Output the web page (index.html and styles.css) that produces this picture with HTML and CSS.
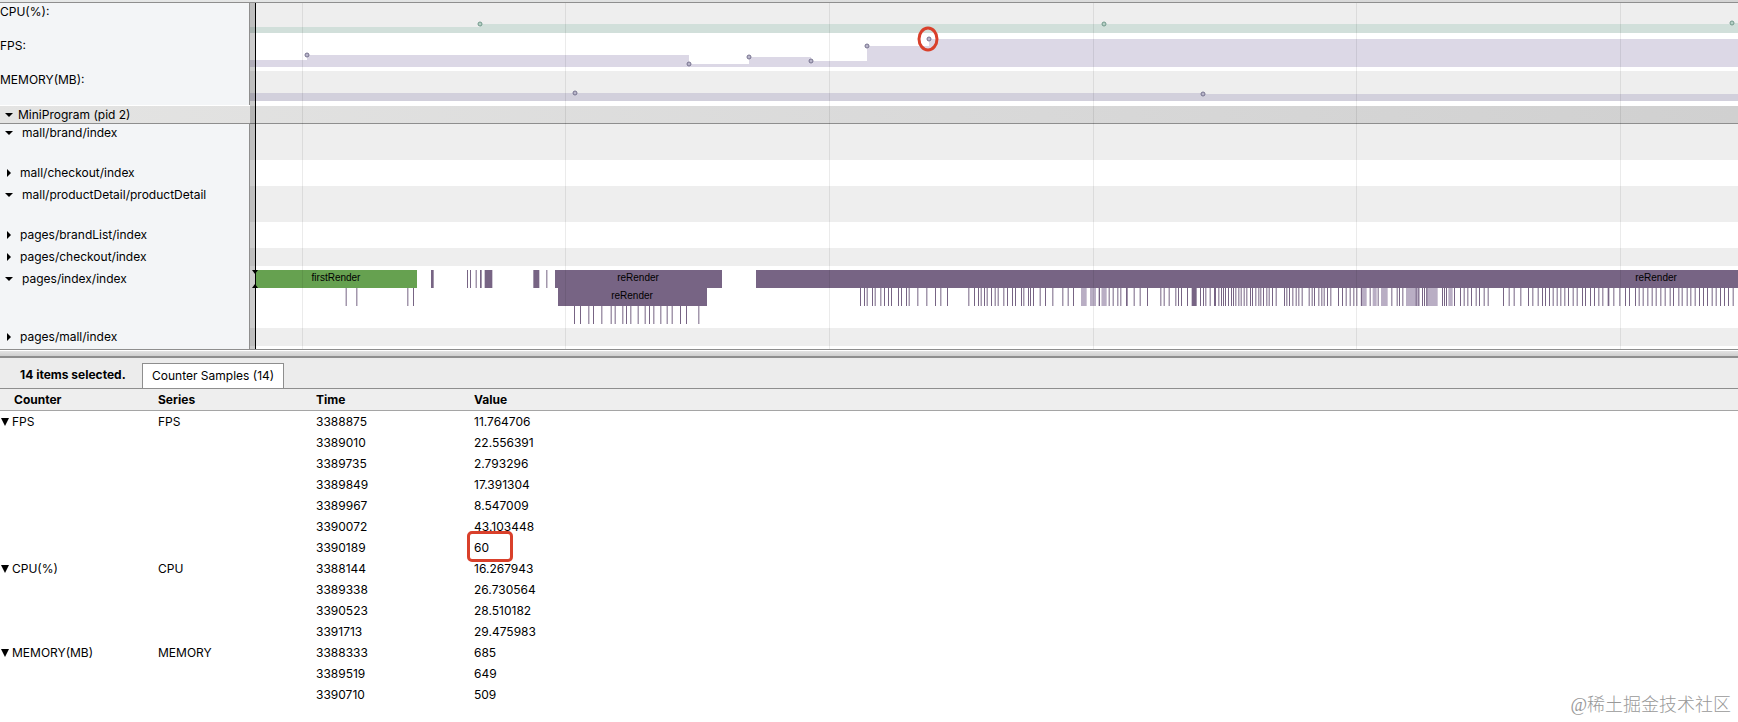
FILE: index.html
```html
<!DOCTYPE html>
<html lang="en">
  <head>
    <meta charset="UTF-8" />
    <title>Trace Viewer</title>
    <link rel="stylesheet" href="styles.css">
  </head>
  <body>
    <div class="timeline">
      <div class="ruler"></div>

      <div class="tracks">
        <div class="row counter">
          <div class="heading">CPU(%):</div>
          <svg class="track">
            <path class="cpu" d="M0 24H230V21H1482V20H4000V30H0z" />
            <g class="dot cpu-dot">
              <circle cx="230" cy="21" r="2" />
              <circle cx="854" cy="21" r="2" />
              <circle cx="1482" cy="20" r="2" />
            </g>
          </svg>
        </div>
        <div class="row counter">
          <div class="heading">FPS:</div>
          <svg class="track white">
            <path class="fps" d="M0 23H57V18H439V27H499V20H561V24H617V9H679V2H4000V30H0z" />
            <g class="dot">
              <circle cx="57" cy="18" r="2" />
              <circle cx="439" cy="27" r="2" />
              <circle cx="499" cy="20" r="2" />
              <circle cx="561" cy="24" r="2" />
              <circle cx="617" cy="9" r="2" />
              <circle cx="679" cy="2" r="2" />
            </g>
            <ellipse class="mark" cx="678" cy="2" rx="9" ry="11" />
          </svg>
        </div>
        <div class="row counter">
          <div class="heading">MEMORY(MB):</div>
          <svg class="track">
            <path class="memory" d="M0 22H953V23H4000V30H0z" />
            <g class="dot">
              <circle cx="325" cy="22" r="2" />
              <circle cx="953" cy="23" r="2" />
            </g>
          </svg>
        </div>

        <button class="process"><i class="arrow down"></i>MiniProgram (pid 2)</button>

        <div class="row tall">
          <button class="heading open"><i class="arrow down"></i>mall/brand/index</button>
          <svg class="track"></svg>
        </div>
        <div class="row">
          <button class="heading"><i class="arrow"></i>mall/checkout/index</button>
          <svg class="track white"></svg>
        </div>
        <div class="row tall">
          <button class="heading open"><i class="arrow down"></i>mall/productDetail/productDetail</button>
          <svg class="track"></svg>
        </div>
        <div class="row">
          <button class="heading"><i class="arrow"></i>pages/brandList/index</button>
          <svg class="track white"></svg>
        </div>
        <div class="row">
          <button class="heading"><i class="arrow"></i>pages/checkout/index</button>
          <svg class="track"></svg>
        </div>
        <div class="row three">
          <button class="heading open"><i class="arrow down"></i>pages/index/index</button>
          <svg class="track white" id="slices">
            <rect class="first" x="6" y="0" width="161" height="18" />
            <rect class="again" x="305" y="0" width="167" height="18" />
            <rect class="again" x="308" y="18" width="149" height="18" />
            <rect class="again" x="506" y="0" width="4000" height="18" />
            <text x="86" y="11">firstRender</text>
            <text x="388" y="11">reRender</text>
            <text x="382" y="29">reRender</text>
            <text x="1406" y="11">reRender</text>
          </svg>
        </div>
        <div class="row last">
          <button class="heading"><i class="arrow"></i>pages/mall/index</button>
          <svg class="track"></svg>
        </div>

        <svg class="grid" id="grid"></svg>
        <div class="splitter"></div>
        <svg class="cursor" width="8" height="18"><path d="M1 0H7L4 4zM1 18H7L4 14z" /></svg>
      </div>
    </div>

    <div class="drag-handle"></div>

    <div class="analysis">
      <div class="tabs">
        <b>14 items selected.</b>
        <button class="tab">Counter Samples (14)</button>
      </div>
      <table>
        <thead>
          <tr><th>Counter</th><th>Series</th><th>Time</th><th>Value</th></tr>
        </thead>
        <tbody>
          <tr><td><i class="fold"></i>FPS</td><td>FPS</td><td>3388875</td><td>11.764706</td></tr>
          <tr><td></td><td></td><td>3389010</td><td>22.556391</td></tr>
          <tr><td></td><td></td><td>3389735</td><td>2.793296</td></tr>
          <tr><td></td><td></td><td>3389849</td><td>17.391304</td></tr>
          <tr><td></td><td></td><td>3389967</td><td>8.547009</td></tr>
          <tr><td></td><td></td><td>3390072</td><td>43.103448</td></tr>
          <tr><td></td><td></td><td>3390189</td><td class="marked">60</td></tr>
          <tr><td><i class="fold"></i>CPU(%)</td><td>CPU</td><td>3388144</td><td>16.267943</td></tr>
          <tr><td></td><td></td><td>3389338</td><td>26.730564</td></tr>
          <tr><td></td><td></td><td>3390523</td><td>28.510182</td></tr>
          <tr><td></td><td></td><td>3391713</td><td>29.475983</td></tr>
          <tr><td><i class="fold"></i>MEMORY(MB)</td><td>MEMORY</td><td>3388333</td><td>685</td></tr>
          <tr><td></td><td></td><td>3389519</td><td>649</td></tr>
          <tr><td></td><td></td><td>3390710</td><td>509</td></tr>
        </tbody>
      </table>
      <div class="watermark">@稀土掘金技术社区</div>
    </div>

    <script>
      const slicesElement = document.querySelector('#slices')
      const gridElement = document.querySelector('#grid')
      const UNITS = 3 // time units in one pixel

      // each slice is a start, or [start, end, light]
      function drawSlices(from, depth, list) {
        list.forEach(item => {
          const [start, end, light] = Array.isArray(item) ? item : [item - 1, item + 2]
          const rect = document.createElementNS('http://www.w3.org/2000/svg', 'rect')
          rect.setAttribute('class', light ? 'again light' : 'again')
          rect.setAttribute('x', from + start / UNITS)
          rect.setAttribute('y', depth * 18)
          rect.setAttribute('width', (end - start) / UNITS)
          rect.setAttribute('height', 18)
          slicesElement.insertBefore(rect, slicesElement.querySelector('text'))
        })
      }

      drawSlices(170, 0, [[33, 41], 142, 151, 168, [180, 185], [194, 217], [340, 358], 380])
      drawSlices(0, 1, [288, 320, 473, 490])
      drawSlices(170, 2, [463, 481, 506, 520, 545, 573, 585, 608, 619, 632, 654, 675, 688, 701, 722, 741, 756, 781, 799, 836])
      drawSlices(500, 1, [
        331, 343, 351, 367, 375, 392, 403, 415, 424, 445, 454, 469, 477, 503, 530, 556, 572, 592,
        656, 673, 685, 693, 703, 711, 724, 735, 744, 761, 772, 787, 796, 814, 821, 835, 841, 850,
        870, 886, 908, 938, 954, 970, [993, 1010, 1], [1020, 1037, 1], 1022, 1036, 1047, [1055, 1068, 1]
      ])
      drawSlices(840, 1, [
        [0, 18, 1], 28, [35, 50, 1], 57, 69, 83, 92, [108, 113], 132, 150, 172,
        212, 222, 237, 257, 265, 274, 292, [305, 320], 331, 340, 347, 360, [372, 378], 386, 394,
        400, 406, 415, 424, 430, 437, 446, 453, 462, 470, 481, 487, 497, 506, 512, 520, 530, 537,
        547, 558, 583, 590, 598, 608, 618, 626, 636, 657, 666, 673, 686, 695, 702, 712, 722, 745,
        757, 768, 780, 791, 800, [812, 830, 1], 814, 840, [848, 860, 1], 864, [873, 893, 1], 905,
        921, 928, 938, [948, 986, 1]
      ])
      drawSlices(1160, 1, [
        [0, 28, 1], 18, 26, 37, 43, [48, 83, 1], 50, 97, 103, 109, [115, 128, 1], 133, 151, 162,
        173, 184, 198, 208, 222, 234, 280, 297, 312, 332, 355, 368, 384, 397, 406, 418, 429, 441,
        452, 464, 475, 489, 501, 517, 526, 541, 553, 566, 578, [593, 598], 611, 629, 646, 658,
        676, 687, 699, 713, 726, 738, 752, 765, 780, 790, 806, 816, 831, 842, 855, 868, 880, 892,
        906, 918, 931, 943, 955, 969
      ])

      // one vertical line every 500ms
      for (let i = 0; i < 16; i++) {
        const line = document.createElementNS('http://www.w3.org/2000/svg', 'rect')
        line.setAttribute('x', Math.floor(52 + i * 263.7))
        line.setAttribute('width', 1)
        line.setAttribute('height', '100%')
        gridElement.appendChild(line)
      }
    </script>
  </body>
</html>
```
FILE: styles.css
```css
html,
body {
  height: 100%;
  margin: 0;
}
body {
  display: flex;
  flex-direction: column;
  font: 12px/18px Inter, 'Liberation Sans', sans-serif;
  color: #000;
  background: #fff;
  overflow: hidden;
}
button {
  margin: 0;
  padding: 0;
  border: none;
  font: inherit;
  color: inherit;
  text-align: left;
}

.ruler {
  height: 2px;
  background: linear-gradient(90deg, #e6e8e8, #d4d4d4);
  border-bottom: 1px solid #8e8e8e;
}
.tracks {
  position: relative;
  border-bottom: 1px solid #8e8e8e;
}
.row {
  display: flex;
  height: 22px;
}
.row.counter {
  height: 34px;
}
.row.tall {
  height: 40px;
}
.row.three {
  height: 58px;
}
.row.last {
  height: 21px;
}
.heading {
  display: flex;
  align-items: flex-start;
  box-sizing: border-box;
  flex: none;
  width: 250px;
  background: #f3f5f7;
  border-right: 1px solid #8e8e8e;
  white-space: nowrap;
}
.track {
  flex: 1;
  min-width: 0;
  height: calc(100% - 4px);
  background: #eee;
  overflow: hidden;
}
.last .track {
  height: 18px;
}
.track.white {
  background: #fff;
  overflow: visible;
}
.process {
  display: flex;
  width: 100%;
  height: 19px;
  box-sizing: border-box;
  background: linear-gradient(90deg, #e4e4e3, #d8d8d8 60%, #d0d0d0);
  border-top: 1px solid #fff;
  border-bottom: 1px solid #8e8e8e;
  line-height: 17px;
}

.arrow {
  flex: none;
  width: 0;
  height: 0;
  margin: 5px 9px 0 7px;
  border: 4px solid transparent;
  border-left: 4px solid #000;
  border-right: 0;
}
.arrow.down {
  margin: 7px 5px 0 5px;
  border: 4px solid transparent;
  border-top: 4px solid #000;
  border-bottom: 0;
}
.open .arrow.down {
  margin-right: 9px;
}

.cpu {
  fill: #d1dfda;
}
.fps {
  fill: #dcd8e6;
}
.memory {
  fill: #d2d0dc;
}
.dot {
  fill: #b9b6ca;
  stroke: #77738f;
  stroke-width: 1px;
}
.cpu-dot {
  fill: #b6d0c6;
  stroke: #72998b;
}
.mark {
  fill: none;
  stroke: #d9402b;
  stroke-width: 3px;
}

.first {
  fill: #66a150;
}
.again {
  fill: #776484;
}
.again.light {
  fill: #b9aec4;
}
#slices {
  overflow: hidden;
}
#slices text {
  font: 10px 'Liberation Sans', sans-serif;
  text-anchor: middle;
}

.grid {
  position: absolute;
  top: 0;
  left: 250px;
  width: calc(100% - 250px);
  height: 100%;
  fill: rgba(0, 0, 0, 0.08);
}
.splitter {
  position: absolute;
  top: 0;
  bottom: 0;
  left: 250px;
  width: 5px;
  background: rgba(0, 0, 0, 0.2);
  border-right: 1px solid #000;
}
.cursor {
  position: absolute;
  left: 251px;
  bottom: 61px;
}

.drag-handle {
  flex: none;
  height: 5px;
  background: linear-gradient(#e2e2e2, #cfcfcf);
  border-top: 1px solid #fff;
  border-bottom: 2px solid #8e8e8e;
}

.analysis {
  position: relative;
  flex: 1;
}
.tabs {
  display: flex;
  align-items: flex-end;
  height: 30px;
  background: #ececec;
  border-bottom: 1px solid #8e8e8e;
}
.tabs b {
  width: 122px;
  padding-left: 20px;
  line-height: 26px;
}
.tab {
  height: 25px;
  padding: 0 9px;
  background: #fff;
  border: 1px solid #8e8e8e;
  border-bottom: none;
}

table {
  width: 100%;
  table-layout: fixed;
  border-collapse: separate;
  border-spacing: 0;
}
th,
td {
  height: 21px;
  padding: 0;
  line-height: 21px;
  text-align: left;
}
th {
  background: #eee;
  border-bottom: 1px solid #a5a5a5;
}
th:nth-child(-n + 3) {
  width: 158px;
}
th:first-child {
  width: 144px;
  padding-left: 14px;
}
td:first-child {
  padding-left: 1px;
}
.fold {
  display: inline-block;
  margin-right: 3px;
  border: 4px solid transparent;
  border-top: 8px solid #000;
  border-bottom: 0;
}
.marked {
  position: relative;
}
.marked:after {
  content: '';
  position: absolute;
  top: -6px;
  left: -7px;
  width: 40px;
  height: 25px;
  border: 3px solid #d9402b;
  border-radius: 5px;
}

.watermark {
  position: absolute;
  right: 7px;
  bottom: 4px;
  color: #999;
  font: 300 18px/26px 'Liberation Serif', 'Noto Sans CJK SC', sans-serif;
}
```
